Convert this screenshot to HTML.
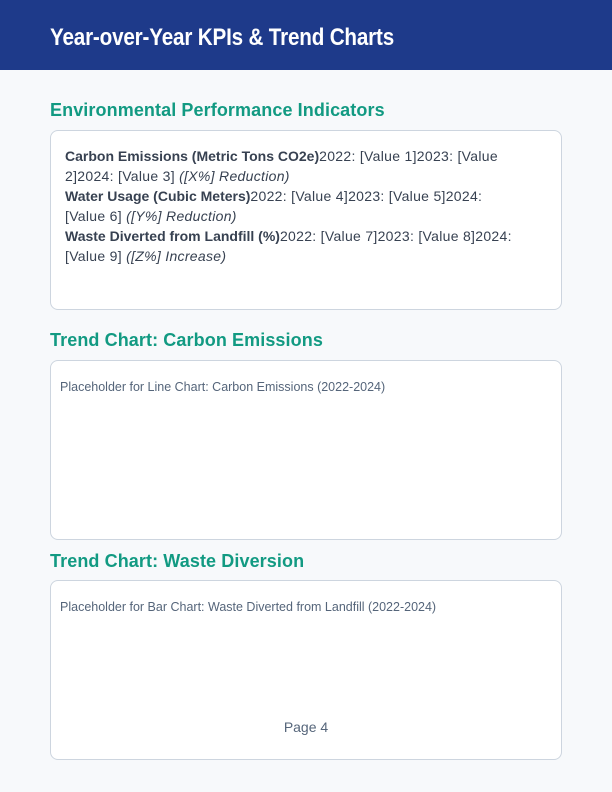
<!DOCTYPE html>
<html><head><meta charset="utf-8"><style>
*{margin:0;padding:0;box-sizing:border-box}
body{width:612px;height:792px;background:#f7f9fb;font-family:"Liberation Sans",sans-serif;position:relative;overflow:hidden}
.hdr{position:absolute;left:0;top:0;width:612px;height:70px;background:#1e3a8a}
.hdr h1{position:absolute;left:50px;top:24px;color:#fff;font-size:24px;font-weight:bold;font-family:"Liberation Sans Narrow","Liberation Sans",sans-serif;transform:scaleX(0.86);transform-origin:left top;white-space:nowrap;letter-spacing:-0.2px}
h2{position:absolute;left:50px;font-size:18px;font-weight:bold;color:#129a82;white-space:nowrap;letter-spacing:0.1px}
.box{position:absolute;left:50px;width:512px;border:1px solid #cdd5df;border-radius:8px;background:#fff}
.kpi{padding:15px 14px;font-size:14px;line-height:20px;color:#374151;white-space:nowrap;letter-spacing:0.3px}
.kpi b{color:#374151;letter-spacing:0}
.ph{position:absolute;left:9px;top:19px;font-size:12.5px;color:#55657a;white-space:nowrap}
.pg{position:absolute;left:0;width:612px;top:719px;text-align:center;font-size:14px;color:#55657a}
</style></head><body>
<div class="hdr"><h1>Year-over-Year KPIs &amp; Trend Charts</h1></div>
<h2 style="top:100px">Environmental Performance Indicators</h2>
<div class="box kpi" style="top:130px;height:180px">
<b>Carbon Emissions (Metric Tons CO2e)</b>2022: [Value 1]2023: [Value<br>2]2024: [Value 3] <i>([X%] Reduction)</i><br>
<b>Water Usage (Cubic Meters)</b>2022: [Value 4]2023: [Value 5]2024:<br>[Value 6] <i>([Y%] Reduction)</i><br>
<b>Waste Diverted from Landfill (%)</b>2022: [Value 7]2023: [Value 8]2024:<br>[Value 9] <i>([Z%] Increase)</i>
</div>
<h2 style="top:330px">Trend Chart: Carbon Emissions</h2>
<div class="box" style="top:360px;height:180px"><div class="ph">Placeholder for Line Chart: Carbon Emissions (2022-2024)</div></div>
<h2 style="top:551px">Trend Chart: Waste Diversion</h2>
<div class="box" style="top:580px;height:180px"><div class="ph">Placeholder for Bar Chart: Waste Diverted from Landfill (2022-2024)</div></div>
<div class="pg">Page 4</div>
</body></html>
